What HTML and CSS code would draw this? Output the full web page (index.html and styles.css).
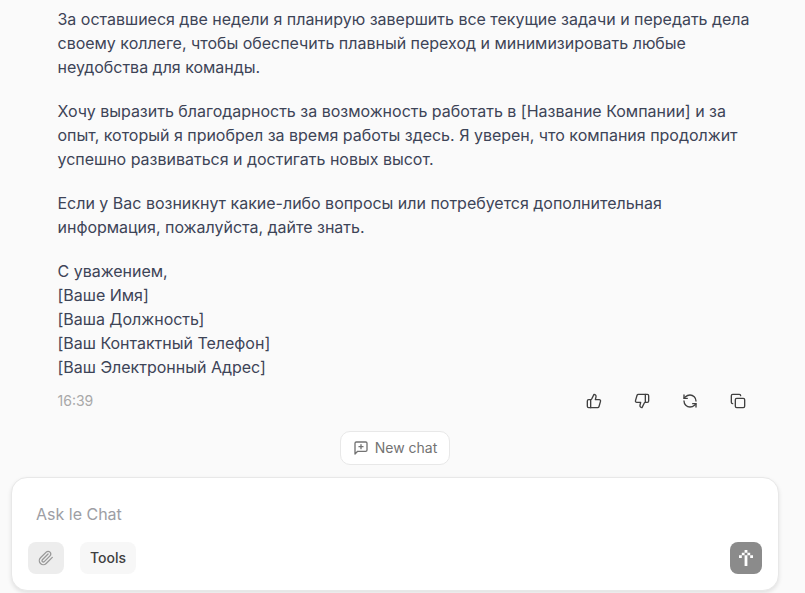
FILE: index.html
```
<!DOCTYPE html>
<html lang="ru">
<head>
    <meta charset="UTF-8">
    <meta name="viewport" content="width=device-width, initial-scale=1.0">
    <title>Le Chat</title>
    <link rel="stylesheet" href="styles.css">
</head>
<body>

<main class="chat">
    <!-- Assistant answer -->
    <article class="message">
        <p>За оставшиеся две недели я планирую завершить все текущие задачи и передать дела<br>
            своему коллеге, чтобы обеспечить плавный переход и минимизировать любые<br>
            неудобства для команды.</p>
        <p>Хочу выразить благодарность за возможность работать в [Название Компании] и за<br>
            опыт, который я приобрел за время работы здесь. Я уверен, что компания продолжит<br>
            успешно развиваться и достигать новых высот.</p>
        <p>Если у Вас возникнут какие-либо вопросы или потребуется дополнительная<br>
            информация, пожалуйста, дайте знать.</p>
        <p>С уважением,<br>
            [Ваше Имя]<br>
            [Ваша Должность]<br>
            [Ваш Контактный Телефон]<br>
            [Ваш Электронный Адрес]</p>
    </article>

    <div class="message-footer">
        <time class="time">16:39</time>
        <div class="actions">
            <button type="button" aria-label="Like">
                <svg class="icon" viewBox="0 0 24 24"><path d="M7 10v12"/><path d="M15 5.88 14 10h5.83a2 2 0 0 1 1.92 2.56l-2.33 8A2 2 0 0 1 17.5 22H4a2 2 0 0 1-2-2v-8a2 2 0 0 1 2-2h2.76a2 2 0 0 0 1.79-1.11L12 2a3.13 3.13 0 0 1 3 3.88Z"/></svg>
            </button>
            <button type="button" aria-label="Dislike">
                <svg class="icon" viewBox="0 0 24 24"><path d="M17 14V2"/><path d="M9 18.12 10 14H4.17a2 2 0 0 1-1.92-2.56l2.33-8A2 2 0 0 1 6.5 2H20a2 2 0 0 1 2 2v8a2 2 0 0 1-2 2h-2.76a2 2 0 0 0-1.79 1.11L12 22a3.13 3.13 0 0 1-3-3.88Z"/></svg>
            </button>
            <button type="button" aria-label="Regenerate">
                <svg class="icon" viewBox="0 0 24 24"><path d="M21 12a9 9 0 0 0-9-9 9.75 9.75 0 0 0-6.74 2.74L3 8"/><path d="M3 3v5h5"/><path d="M3 12a9 9 0 0 0 9 9 9.75 9.75 0 0 0 6.74-2.74L21 16"/><path d="M16 16h5v5"/></svg>
            </button>
            <button type="button" aria-label="Copy">
                <svg class="icon" viewBox="0 0 24 24"><rect x="8" y="8" width="14" height="14" rx="2"/><path d="M4 16c-1.1 0-2-.9-2-2V4c0-1.1.9-2 2-2h10c1.1 0 2 .9 2 2"/></svg>
            </button>
        </div>
    </div>
</main>

<button type="button" class="new-chat">
    <svg class="icon" viewBox="0 0 24 24"><path d="M21 15a2 2 0 0 1-2 2H7l-4 4V5a2 2 0 0 1 2-2h14a2 2 0 0 1 2 2z"/><path d="M12 7v6"/><path d="M9 10h6"/></svg>
    New chat
</button>

<!-- Prompt box -->
<form class="prompt">
    <input type="text" placeholder="Ask le Chat" aria-label="Ask le Chat">
    <div class="prompt-bar">
        <button type="button" class="attach" aria-label="Attach">
            <svg class="icon" viewBox="0 0 24 24"><path d="m21.44 11.05-9.19 9.19a6 6 0 0 1-8.49-8.49l8.57-8.57A4 4 0 1 1 18 8.84l-8.59 8.57a2 2 0 0 1-2.83-2.83l8.49-8.48"/></svg>
        </button>
        <button type="button" class="tools">Tools</button>
        <button type="submit" class="send" aria-label="Send">
            <svg viewBox="0 0 5 6" preserveAspectRatio="none"><path d="M2 0h1v1H2zM1 1h1v1H1zM3 1h1v1H3zM0 2h1v1H0zM4 2h1v1H4zM2 2h1v4H2z"/></svg>
        </button>
    </div>
</form>

</body>
</html>
```
FILE: styles.css
```
* {
    box-sizing: border-box;
}

body {
    margin: 0;
    height: 593px;
    overflow: hidden;
    background-color: #fafafa;
    font-family: Inter, sans-serif;
    font-size: 16px;
    line-height: 24px;
    color: #3d4457;
}

button {
    border: none;
    padding: 0;
    background-color: transparent;
    font-family: inherit;
    font-size: 14px;
    line-height: 20px;
    cursor: pointer;
}

.icon {
    width: 16px;
    height: 16px;
    fill: none;
    stroke: currentColor;
    stroke-width: 2;
    stroke-linecap: round;
    stroke-linejoin: round;
}

/* Message */
.chat {
    width: 696.5px;
    margin-left: 57.5px;
    padding-top: 7px;
}

.message p {
    margin: 0 0 20px;
    letter-spacing: -0.012px;
    white-space: nowrap;
}

.message p:last-child {
    margin-bottom: 0;
}

.message-footer {
    display: flex;
    align-items: center;
    justify-content: space-between;
    height: 32px;
    margin-top: 6px;
}

.time {
    font-size: 14px;
    color: #a8a8a8;
}

.actions {
    display: flex;
    gap: 16px;
}

.actions button {
    display: flex;
    align-items: center;
    justify-content: center;
    width: 32px;
    height: 32px;
    color: #404040;
}

/* New chat button */
.new-chat {
    display: flex;
    align-items: center;
    justify-content: center;
    gap: 6px;
    width: 110px;
    height: 34px;
    margin: 14px 0 0 340px;
    border: 1px solid #e8e8e8;
    border-radius: 10px;
    background-color: #fff;
    color: #737373;
}

/* Prompt box */
.prompt {
    width: 768px;
    height: 114px;
    margin: 12px 0 0 11px;
    padding: 24px 16px 16px;
    border: 1px solid #e8e8e8;
    border-radius: 16px;
    background-color: #fff;
    box-shadow: 0 2px 4px rgba(0, 0, 0, 0.1);
}

.prompt input {
    display: block;
    width: 100%;
    height: 24px;
    padding: 0 8px;
    border: none;
    outline: none;
    background-color: transparent;
    font: inherit;
}

.prompt input::placeholder {
    color: #9d9ea4;
}

.prompt-bar {
    display: flex;
    align-items: center;
    margin-top: 16px;
}

.prompt-bar button {
    display: flex;
    align-items: center;
    justify-content: center;
    height: 32px;
    border-radius: 8px;
}

.prompt-bar .attach {
    width: 36px;
    background-color: #ededed;
    color: #999;
}

.prompt-bar .tools {
    width: 56px;
    margin-left: 16px;
    background-color: #f7f7f7;
    font-weight: 500;
    color: #404040;
}

.prompt-bar .send {
    width: 32px;
    margin-left: auto;
    background-color: #8b8b8b;
}

.send svg {
    width: 14px;
    height: 16px;
    fill: #fff;
}
```
